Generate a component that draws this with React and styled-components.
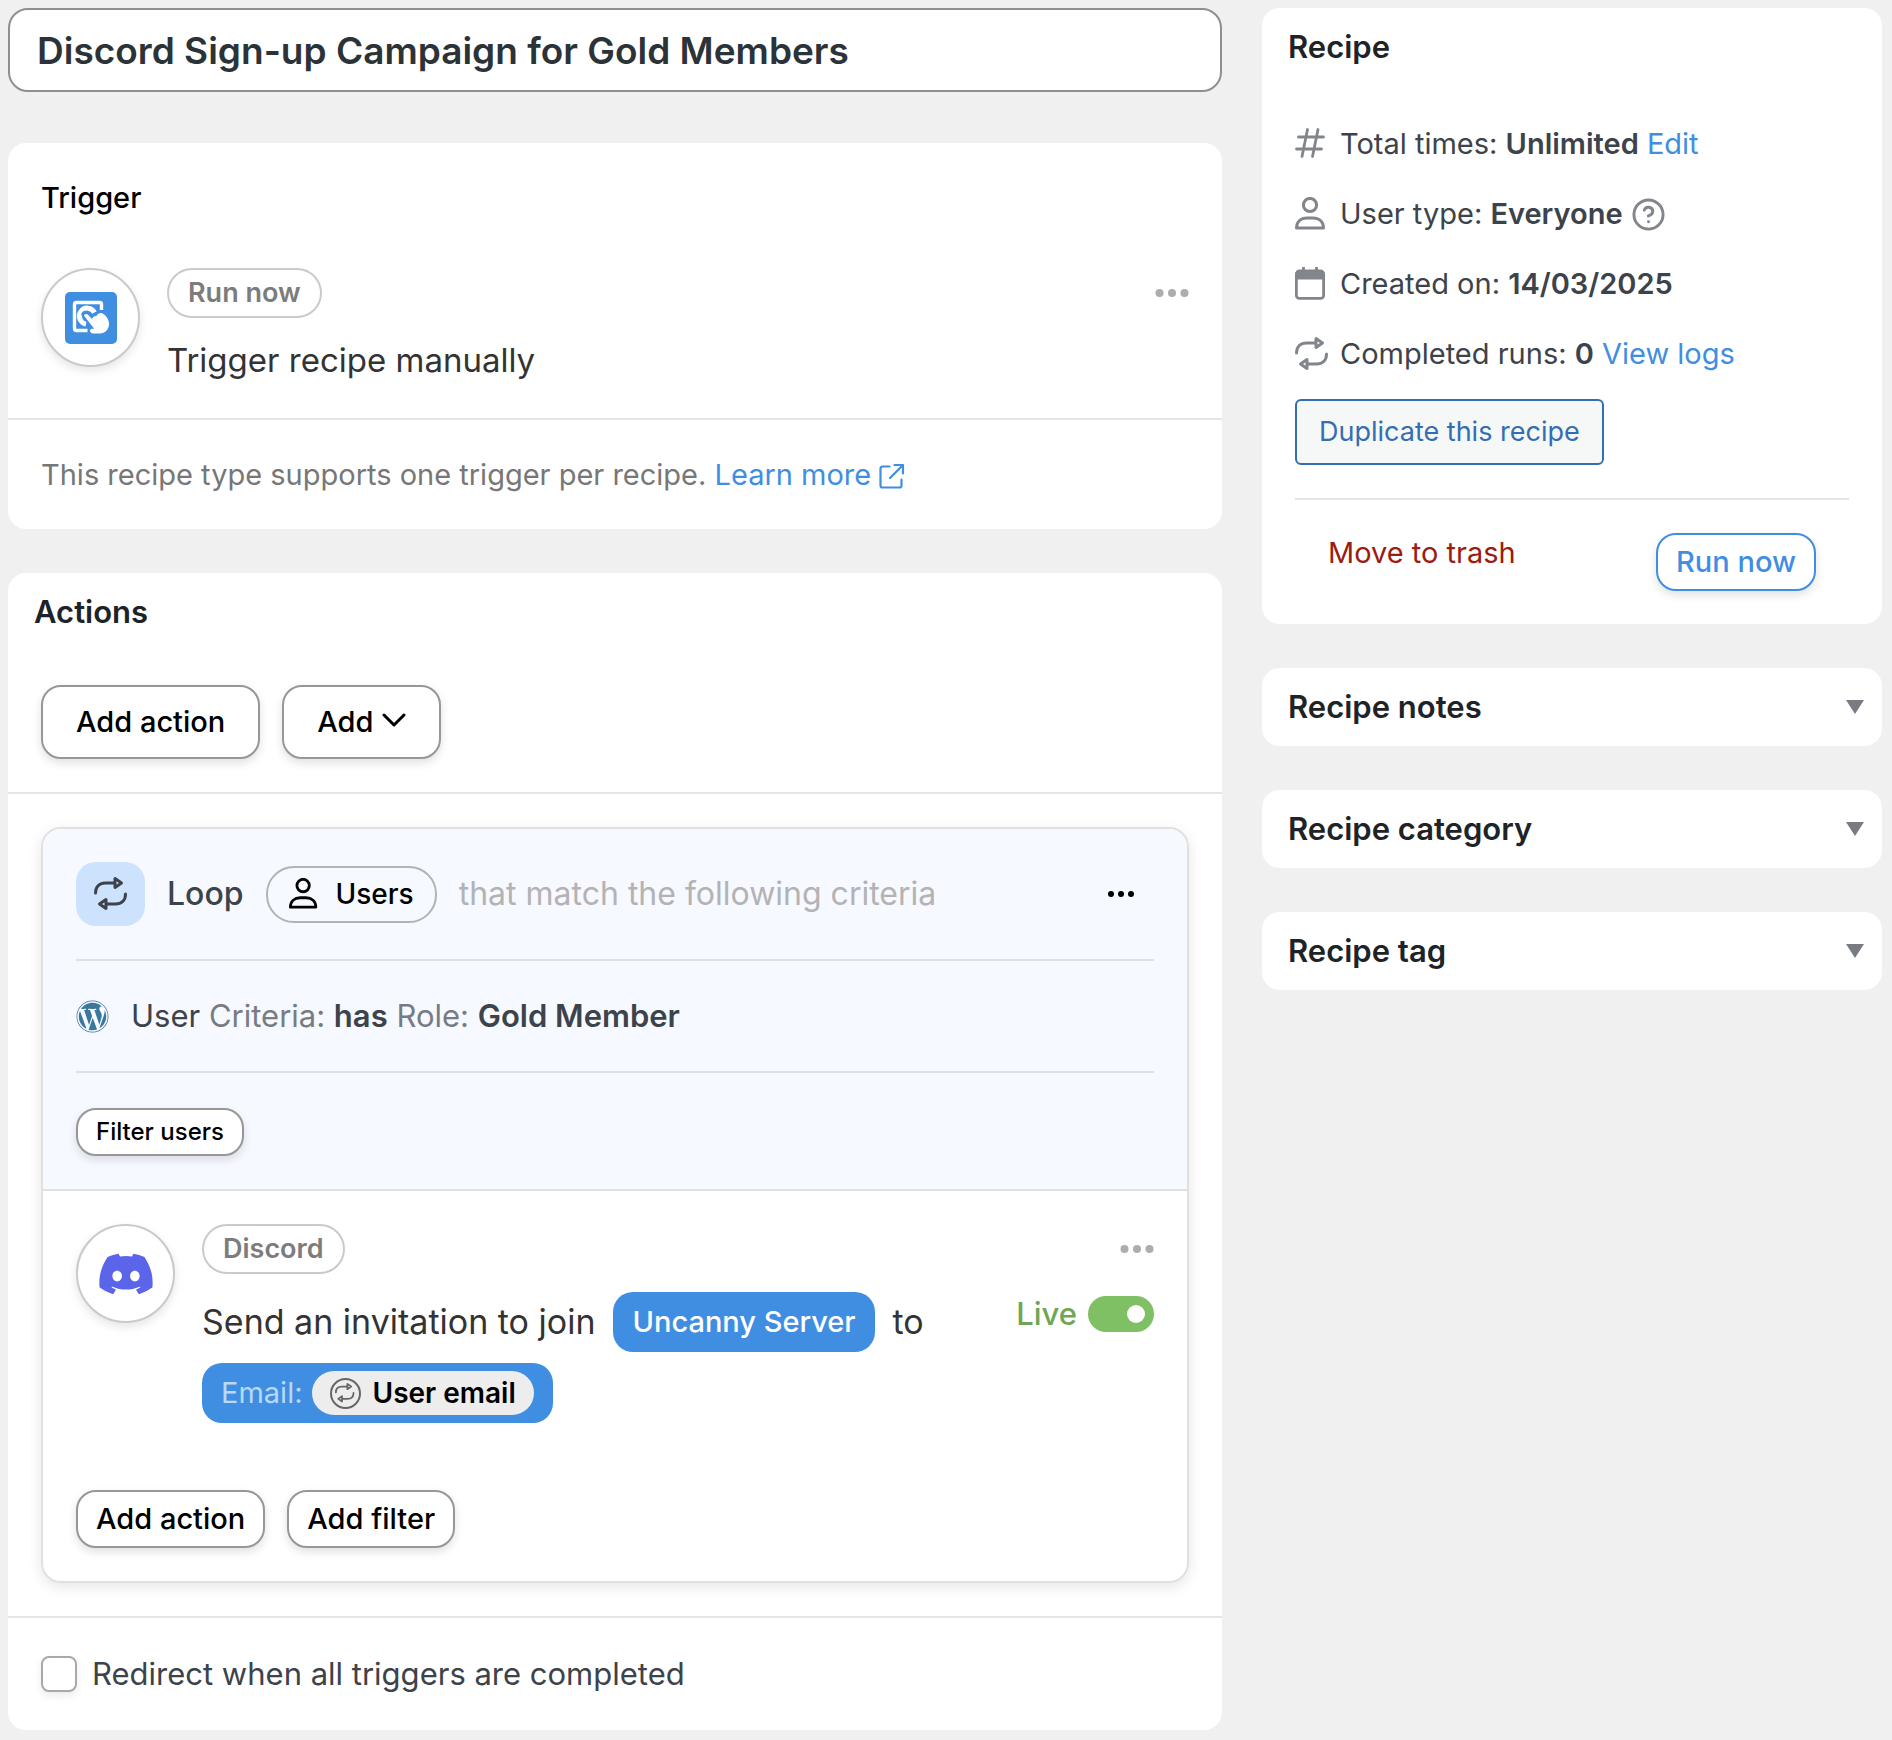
import React, { useState } from "react";
import styled, { createGlobalStyle, css } from "styled-components";
import { FaDiscord, FaWordpress } from "react-icons/fa";
import { CircleHelp } from "lucide-react";

const colors = {
  page: "#f0f0f0",
  blue: "#3f8ee2",
  text: "#3c434a",
  heading: "#1d2327",
  muted: "#777777",
  line: "#e5e5e5",
  icon: "#82868b",
};

const LoopIcon = ({ size = 34, stroke = 3 }) => (
  <svg
    width={size}
    height={size}
    viewBox="0 0 34 34"
    fill="none"
    stroke="currentColor"
    strokeWidth={stroke}
    strokeLinecap="round"
    strokeLinejoin="round"
    aria-hidden="true"
  >
    <path d="M1.500 16C1.500 9.500 5.500 6 11.500 6H20.500" />
    <path d="M21 1.500L27.500 6L21 10.500Z" />
    <path d="M31.500 17C31.500 23.500 27.500 27 21.500 27H12.500" />
    <path d="M12 22.500L5.500 27L12 31.500Z" />
  </svg>
);

const PersonIcon = ({ size = 34 }) => (
  <svg
    width={size}
    height={size}
    viewBox="2 1 34 34"
    fill="none"
    stroke="currentColor"
    strokeWidth="3"
    strokeLinejoin="round"
    aria-hidden="true"
  >
    <circle cx="17" cy="9" r="6.600" />
    <path d="M3.500 32C3.500 25.500 8 22 14 22H20C26 22 30.500 25.500 30.500 32Z" />
  </svg>
);

const HashIcon = () => (
  <svg
    width="34"
    height="34"
    viewBox="2 1 34 34"
    fill="none"
    stroke="currentColor"
    strokeWidth="2.800"
    strokeLinecap="round"
    aria-hidden="true"
  >
    <path d="M5.500 11H30.500M3.500 23H28.500M14.500 3.500L9 30.500M25 3.500L19.500 30.500" />
  </svg>
);

const CalendarIcon = () => (
  <svg
    width="34"
    height="34"
    viewBox="2 1 34 34"
    fill="none"
    stroke="currentColor"
    strokeWidth="2.800"
    aria-hidden="true"
  >
    <rect x="3.400" y="5.400" width="27.200" height="27" rx="3" />
    <path d="M3.400 8a3 3 0 0 1 3-3H27.600a3 3 0 0 1 3 3V12H3.400Z" fill="currentColor" />
    <path d="M10.500 6V1M23.500 6V1" />
  </svg>
);

const ExternalIcon = () => (
  <svg
    width="26"
    height="26"
    viewBox="0 0 26 26"
    fill="none"
    stroke="currentColor"
    strokeWidth="2.200"
    strokeLinecap="round"
    strokeLinejoin="round"
    aria-hidden="true"
  >
    <path d="M10.500 3.500H3.500A2 2 0 0 0 1.500 5.500V22.500A2 2 0 0 0 3.500 24.500H20.500A2 2 0 0 0 22.500 22.500V16.500" />
    <path d="M11 15L24 2M15.500 2H24V10.500" />
  </svg>
);

const ChevronIcon = () => (
  <svg
    width="24"
    height="24"
    viewBox="0 0 24 24"
    fill="none"
    stroke="currentColor"
    strokeWidth="3"
    strokeLinecap="round"
    strokeLinejoin="round"
    aria-hidden="true"
  >
    <path d="M2 5L12 15L22 5" />
  </svg>
);

const TouchIcon = () => (
  <svg width="52" height="52" viewBox="0 0 52 52" aria-hidden="true">
    <rect width="52" height="52" rx="5" fill={colors.blue} />
    <g fill="none" stroke="#fff" strokeLinecap="butt">
      <path
        d="M36.500 18V12.500a2 2 0 0 0-2-2H11.500a2 2 0 0 0-2 2V36.500a2 2 0 0 0 2 2H22.500"
        strokeWidth="3.400"
      />
      <path d="M29.500 20.500A8 8 0 1 0 21 32" strokeWidth="5" />
    </g>
    <path
      d="M20 22.500L31 35"
      stroke={colors.blue}
      strokeWidth="7"
      strokeLinecap="round"
    />
    <path
      d="M18.800 23.500C20 21.300 22 21.500 23.500 23.200L27 27C28 24.500 30 23.500 31.500 24C32 22 35.500 20.200 37.500 21.500C41 23 44.500 28.500 44 32.500C43.500 38 40 41.500 35 41.500H28C25 41 24 38 26 37C27 36.500 28.500 36.800 29 36.500Z"
      fill="#fff"
    />
  </svg>
);

const MoreIcon = ({ width = 34, dot = 4, step = 12.5 }) => (
  <svg width={width} height="8" viewBox={`0 0 ${width} 8`} aria-hidden="true">
    {[-1, 0, 1].map((n) => (
      <circle key={n} cx={width / 2 + n * step} cy="4" r={dot} fill="currentColor" />
    ))}
  </svg>
);

const details = [
  { icon: <HashIcon />, label: "Total times:", value: "Unlimited", link: "Edit" },
  { icon: <PersonIcon />, label: "User type:", value: "Everyone", help: true },
  { icon: <CalendarIcon />, label: "Created on:", value: "14/03/2025" },
  { icon: <LoopIcon />, label: "Completed runs:", value: "0", link: "View logs" },
];

const App = () => {
  const [title, setTitle] = useState("Discord Sign-up Campaign for Gold Members");
  const [live, setLive] = useState(true);
  const [redirect, setRedirect] = useState(false);

  return (
    <>
      <GlobalStyle />
      <Page>
        <Column>
          <TitleInput
            aria-label="Recipe title"
            value={title}
            onChange={(e) => setTitle(e.target.value)}
          />

          <Card>
            <TriggerBody>
              <TriggerHeading>Trigger</TriggerHeading>
              <Item>
                <Avatar>
                  <TouchIcon />
                </Avatar>
                <ItemBody $gap={22}>
                  <Tag>Run now</Tag>
                  <ItemTitle>Trigger recipe manually</ItemTitle>
                </ItemBody>
                <MoreButton aria-label="Trigger options">
                  <MoreIcon />
                </MoreButton>
              </Item>
            </TriggerBody>
            <TriggerFooter>
              This recipe type supports one trigger per recipe.{" "}
              <Link href="#learn-more">
                Learn more <ExternalIcon />
              </Link>
            </TriggerFooter>
          </Card>

          <Card>
            <PanelHeading>Actions</PanelHeading>
            <Toolbar>
              <Button $large>Add action</Button>
              <Button $large>
                Add <ChevronIcon />
              </Button>
            </Toolbar>
            <LoopWrapper>
              <Loop>
                <LoopHeader>
                  <LoopTop>
                    <LoopBadge>
                      <LoopIcon />
                    </LoopBadge>
                    <LoopLabel>Loop</LoopLabel>
                    <UsersButton>
                      <PersonIcon size={32} />
                      Users
                    </UsersButton>
                    <LoopHint>that match the following criteria</LoopHint>
                    <MoreButton $dark aria-label="Loop options">
                      <MoreIcon width={26} dot={3} step={10} />
                    </MoreButton>
                  </LoopTop>
                  <Criteria>
                    <FaWordpress size={33} color="#3b769b" />
                    <p>
                      User <span>Criteria:</span> <strong>has</strong>{" "}
                      <span>Role:</span> <strong>Gold Member</strong>
                    </p>
                  </Criteria>
                  <FilterRow>
                    <Button $small>Filter users</Button>
                  </FilterRow>
                </LoopHeader>
                <LoopBody>
                  <Item>
                    <Avatar>
                      <FaDiscord size={58} color="#5b65ea" />
                    </Avatar>
                    <ItemBody $gap={18}>
                      <Tag>Discord</Tag>
                      <Sentence>
                        <span>Send an invitation to join</span>
                        <Token>Uncanny Server</Token>
                        <span>to</span>
                        <Token>
                          <TokenLabel>Email:</TokenLabel>
                          <TokenValue>
                            <TokenIcon>
                              <LoopIcon size={20} />
                            </TokenIcon>
                            User email
                          </TokenValue>
                        </Token>
                      </Sentence>
                    </ItemBody>
                    <Side>
                      <MoreButton aria-label="Action options">
                        <MoreIcon />
                      </MoreButton>
                      <LiveLabel>
                        Live
                        <Switch
                          type="checkbox"
                          role="switch"
                          checked={live}
                          onChange={() => setLive(!live)}
                        />
                      </LiveLabel>
                    </Side>
                  </Item>
                  <LoopActions>
                    <Button>Add action</Button>
                    <Button>Add filter</Button>
                  </LoopActions>
                </LoopBody>
              </Loop>
            </LoopWrapper>
            <Redirect>
              <Checkbox
                type="checkbox"
                checked={redirect}
                onChange={() => setRedirect(!redirect)}
              />
              Redirect when all triggers are completed
            </Redirect>
          </Card>
        </Column>

        <Column as="aside">
          <Card>
            <PanelHeading>Recipe</PanelHeading>
            <Details>
              {details.map((e) => (
                <Detail key={e.label}>
                  {e.icon}
                  <p>
                    {e.label} <strong>{e.value}</strong>{" "}
                    {e.link && <Link href="#recipe">{e.link}</Link>}
                  </p>
                  {e.help && <CircleHelp size={35} strokeWidth={2} />}
                </Detail>
              ))}
              <DuplicateButton>Duplicate this recipe</DuplicateButton>
              <Publish>
                <TrashLink href="#trash">Move to trash</TrashLink>
                <Button $primary>Run now</Button>
              </Publish>
            </Details>
          </Card>
          {["Recipe notes", "Recipe category", "Recipe tag"].map((name) => (
            <Card key={name}>
              <PanelHeading>
                <PanelToggle aria-expanded="false">
                  {name}
                  <Triangle width="18" height="14" viewBox="0 0 18 14">
                    <path d="M0 0H18L9 14Z" fill="currentColor" />
                  </Triangle>
                </PanelToggle>
              </PanelHeading>
            </Card>
          ))}
        </Column>
      </Page>
    </>
  );
};

const GlobalStyle = createGlobalStyle`
  * {
    box-sizing: border-box;
  }
  body {
    margin: 0;
    background: ${colors.page};
    color: ${colors.text};
    font-family: Inter, "Liberation Sans", sans-serif;
    font-size: 29px;
    line-height: 40px;
  }
  h2, p {
    margin: 0;
  }
  strong {
    font-weight: 600;
  }
  button, input {
    font: inherit;
    margin: 0;
  }
  button {
    cursor: pointer;
  }
  svg {
    flex-shrink: 0;
  }
`;

const Page = styled.main`
  display: grid;
  grid-template-columns: minmax(0, 1fr) 620px;
  align-items: start;
  gap: 40px;
  padding: 8px 10px 10px 8px;
  @media screen and (max-width: 1400px) {
    grid-template-columns: minmax(0, 1fr);
  }
`;

const Column = styled.div`
  display: flex;
  flex-direction: column;
  gap: 44px;
`;

const TitleInput = styled.input`
  width: 100%;
  height: 84px;
  margin-bottom: 7px;
  padding: 0 27px;
  border: 2px solid #8c8f94;
  border-radius: 20px;
  background: white;
  color: #2c3338;
  font-size: 37px;
  font-weight: 600;
`;

const Card = styled.section`
  background: white;
  border-radius: 18px;
`;

const TriggerBody = styled.div`
  padding: 33px 33px 38px;
  border-bottom: 2px solid ${colors.line};
`;

const TriggerHeading = styled.h2`
  margin-bottom: 48px;
  color: black;
  font-size: 29px;
  font-weight: 500;
  line-height: 44px;
`;

const TriggerFooter = styled.p`
  padding: 35px 33px 34px;
  color: ${colors.muted};
`;

const PanelHeading = styled.h2`
  padding: 17px 26px;
  color: ${colors.heading};
  font-size: 31px;
  font-weight: 600;
  line-height: 44px;
`;

const PanelToggle = styled.button`
  display: flex;
  align-items: center;
  justify-content: space-between;
  width: 100%;
  padding: 0;
  border: none;
  background: none;
  color: inherit;
`;

const Triangle = styled.svg`
  margin-right: -8px;
  color: #787c82;
`;

const Item = styled.div`
  display: flex;
  align-items: flex-start;
`;

const Avatar = styled.div`
  display: flex;
  align-items: center;
  justify-content: center;
  flex-shrink: 0;
  width: 99px;
  height: 99px;
  margin-right: 27px;
  border: 2px solid #cacaca;
  border-radius: 50%;
  background: white;
  box-shadow: 0 4px 10px rgba(0, 0, 0, 0.1);
`;

const ItemBody = styled.div`
  display: flex;
  flex: 1;
  flex-direction: column;
  align-items: flex-start;
  gap: ${(props) => props.$gap}px;
  min-width: 0;
  color: #333333;
`;

const ItemTitle = styled.p`
  font-size: 33px;
`;

const Tag = styled.span`
  height: 50px;
  padding: 0 19px;
  border: 2px solid #cacaca;
  border-radius: 25px;
  color: #7c7c7c;
  font-size: 27px;
  font-weight: 600;
  line-height: 46px;
`;

const MoreButton = styled.button`
  display: flex;
  align-items: center;
  height: 50px;
  margin-left: auto;
  padding: 0 ${(props) => (props.$dark ? 20 : 0)}px;
  border: none;
  background: none;
  color: ${(props) => (props.$dark ? "black" : "#adadad")};
`;

const Link = styled.a`
  color: ${colors.blue};
  text-decoration: none;
  svg {
    vertical-align: -4px;
  }
`;

const Button = styled.button`
  display: inline-flex;
  align-items: center;
  gap: 9px;
  height: 58px;
  padding: 0 18px;
  border: 2px solid #979797;
  border-radius: 20px;
  background: white;
  color: black;
  font-size: 29px;
  font-weight: 500;
  box-shadow: 0 4px 10px rgba(0, 0, 0, 0.12);
  ${(props) =>
    props.$large &&
    css`
      height: 74px;
      padding: 0 33px;
    `}
  ${(props) =>
    props.$small &&
    css`
      height: 48px;
      font-size: 24px;
    `}
  ${(props) =>
    props.$primary &&
    css`
      border-color: ${colors.blue};
      color: ${colors.blue};
    `}
`;

const Toolbar = styled.div`
  display: flex;
  gap: 22px;
  padding: 34px 33px 33px;
  border-bottom: 2px solid ${colors.line};
`;

const LoopWrapper = styled.div`
  padding: 33px;
  border-bottom: 2px solid ${colors.line};
`;

const Loop = styled.div`
  overflow: hidden;
  border: 2px solid #e0e0e0;
  border-radius: 20px;
  box-shadow: 0 4px 14px rgba(0, 0, 0, 0.1);
`;

const LoopHeader = styled.div`
  padding: 0 33px;
  border-bottom: 2px solid #e0e0e0;
  background: #f6f9ff;
`;

const LoopTop = styled.div`
  display: flex;
  align-items: center;
  gap: 22px;
  padding: 33px 0;
  border-bottom: 2px solid #e0e0e0;
  font-size: 32px;
`;

const LoopBadge = styled.span`
  display: flex;
  align-items: center;
  justify-content: center;
  width: 69px;
  height: 64px;
  border-radius: 20px;
  background: #cde3fd;
`;

const LoopLabel = styled.span`
  color: ${colors.text};
  font-weight: 500;
`;

const UsersButton = styled.button`
  display: flex;
  align-items: center;
  gap: 15px;
  height: 57px;
  padding: 0 21px;
  border: 2px solid #b3b3b3;
  border-radius: 28px;
  background: none;
  color: black;
  font-size: 28px;
  font-weight: 500;
`;

const LoopHint = styled.span`
  color: #b3b3b3;
`;

const Criteria = styled.div`
  display: flex;
  align-items: center;
  gap: 22px;
  height: 112px;
  border-bottom: 2px solid #e0e0e0;
  font-size: 31px;
  span {
    color: #787c82;
  }
`;

const FilterRow = styled.div`
  display: flex;
  padding: 35px 0 33px;
`;

const LoopBody = styled.div`
  padding: 33px;
`;

const Sentence = styled.div`
  display: flex;
  flex-wrap: wrap;
  align-items: center;
  gap: 11px 18px;
  font-size: 34px;
`;

const Token = styled.button`
  display: flex;
  align-items: center;
  gap: 9px;
  height: 60px;
  padding: 0 19px;
  border: none;
  border-radius: 20px;
  background: ${colors.blue};
  color: white;
  font-size: 29px;
  font-weight: 500;
`;

const TokenLabel = styled.span`
  color: #b9d8f8;
  font-weight: 400;
`;

const TokenValue = styled.span`
  display: flex;
  align-items: center;
  gap: 12px;
  height: 44px;
  padding: 0 18px;
  border-radius: 22px;
  background: #ededed;
  color: black;
  font-size: 28px;
  font-weight: 600;
`;

const TokenIcon = styled.span`
  display: flex;
  align-items: center;
  justify-content: center;
  width: 31px;
  height: 31px;
  border: 2px solid #666666;
  border-radius: 50%;
  color: #666666;
`;

const Side = styled.div`
  display: flex;
  flex-direction: column;
  align-items: flex-end;
  gap: 20px;
`;

const LiveLabel = styled.label`
  display: flex;
  align-items: center;
  gap: 11px;
  height: 40px;
  color: #6fa653;
  font-size: 31px;
  font-weight: 500;
`;

const Switch = styled.input`
  appearance: none;
  display: flex;
  align-items: center;
  justify-content: ${(props) => (props.checked ? "flex-end" : "flex-start")};
  width: 66px;
  height: 36px;
  padding: 0 9px;
  border-radius: 18px;
  background: ${(props) => (props.checked ? "#7fc065" : "#b3b3b3")};
  &::before {
    content: "";
    width: 18px;
    height: 18px;
    border-radius: 50%;
    background: white;
  }
`;

const LoopActions = styled.div`
  display: flex;
  gap: 22px;
  margin-top: 67px;
`;

const Redirect = styled.label`
  display: flex;
  align-items: center;
  gap: 15px;
  height: 112px;
  padding: 0 33px;
  font-size: 31px;
`;

const Checkbox = styled.input`
  appearance: none;
  width: 36px;
  height: 36px;
  border: 2px solid #a9a9a9;
  border-radius: 8px;
  background: white;
  box-shadow: 0 4px 8px rgba(0, 0, 0, 0.08);
  &:checked {
    background: ${colors.blue};
  }
`;

const Details = styled.div`
  padding: 23px 33px 33px;
`;

const Detail = styled.div`
  display: flex;
  align-items: center;
  height: 70px;
  p {
    margin: 0 8px 0 11px;
  }
  > svg {
    color: ${colors.icon};
  }
`;

const DuplicateButton = styled.button`
  height: 66px;
  margin-top: 10px;
  padding: 0 22px;
  border: 2px solid #346eb2;
  border-radius: 6px;
  background: #f6f7f7;
  color: #346eb2;
  font-size: 27px;
`;

const Publish = styled.div`
  display: flex;
  align-items: flex-start;
  justify-content: space-between;
  margin-top: 33px;
  padding: 33px 33px 0;
  border-top: 2px solid ${colors.line};
`;

const TrashLink = styled.a`
  color: #9b1c11;
  text-decoration: none;
`;

export default App;
